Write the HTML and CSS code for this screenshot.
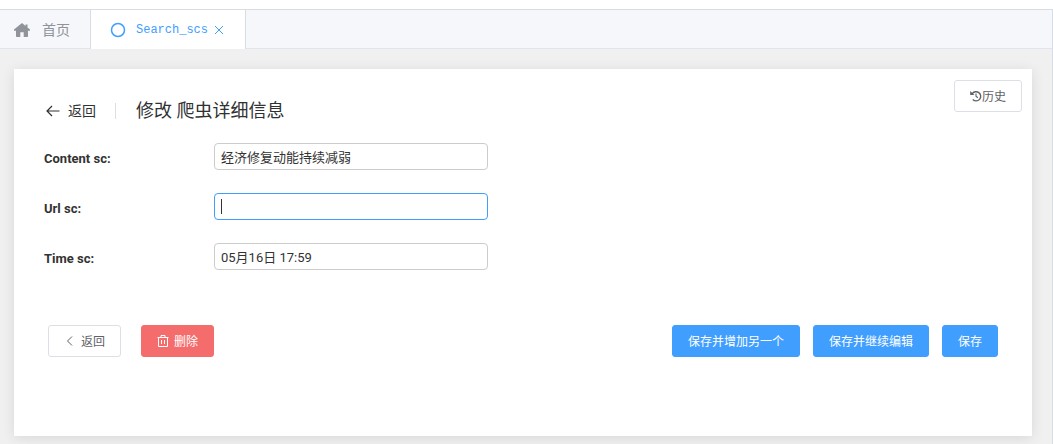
FILE: index.html
```html
<!DOCTYPE html>
<html lang="zh-CN">
<head>
<meta charset="utf-8">
<meta name="viewport" content="width=device-width, initial-scale=1">
<title>修改 爬虫详细信息</title>
<link rel="stylesheet" href="styles.css">
</head>
<body>
<div class="workspace">
  <nav class="tabs">
    <a class="tab" href="#home">
      <svg class="icon-home" viewBox="0 0 16 14" aria-hidden="true"><path d="M8 0 0 6.500v1.300h2V13.200a.8.8 0 0 0 .8.8H6.300V9.300h3.400V14h3.500a.8.8 0 0 0 .8-.8V7.800h2V6.500L13.500 4.500V1.500h-2v1.400z" fill="currentColor"/></svg>
      <span>首页</span>
    </a>
    <div class="tab tab-active">
      <svg class="icon-circle" viewBox="0 0 16 16" aria-hidden="true"><circle cx="8" cy="8" r="6.500" fill="none" stroke="currentColor" stroke-width="1.500"/></svg>
      <a class="tab-name" href="#search">Search_scs</a>
      <button class="tab-close" type="button" aria-label="关闭">
        <svg viewBox="0 0 10 10" aria-hidden="true"><path d="M1 1l8 8M9 1L1 9" stroke="currentColor"/></svg>
      </button>
    </div>
  </nav>
  <main class="content">
    <form class="card">
      <header class="card-head">
        <a class="back" href="#back">
          <svg class="icon-back" viewBox="0 0 14 12" aria-hidden="true"><path d="M13.500 6H1M6 1 1 6l5 5" fill="none" stroke="currentColor" stroke-width="1.200"/></svg>
          <span>返回</span>
        </a>
        <h1 class="title">修改 爬虫详细信息</h1>
        <button class="btn history" type="button">
          <svg class="icon-history" viewBox="0 0 13 13" aria-hidden="true"><path d="M2.300 4.300A5 5 0 1 1 3 10.300" fill="none" stroke="currentColor" stroke-width="1.500"/><path d="M.2 1.200v4.300h4.600z" fill="currentColor"/><path d="M6.500 3.800v3l2 1.600" fill="none" stroke="currentColor" stroke-width="1.200"/></svg>历史
        </button>
      </header>
      <div class="fields">
        <label class="label" for="content">Content sc:</label>
        <input class="input" id="content" type="text" value="经济修复动能持续减弱">
        <label class="label" for="url">Url sc:</label>
        <input class="input input-current" id="url" type="text">
        <label class="label" for="time">Time sc:</label>
        <input class="input" id="time" type="text" value="05月16日 17:59">
      </div>
      <footer class="actions">
        <div class="group group-left">
          <button class="btn" type="button">
            <svg class="icon-btn" viewBox="0 0 12 12" aria-hidden="true"><path d="M8 1.500 3.500 6 8 10.500" fill="none" stroke="currentColor"/></svg>
            <span>返回</span>
          </button>
          <button class="btn btn-danger" type="button">
            <svg class="icon-btn" viewBox="0 0 12 12" aria-hidden="true"><path d="M.5 2.500h11M4 2.500v-2h4v2M1.500 2.500v9h9v-9M4.500 5v4M7.500 5v4" fill="none" stroke="currentColor"/></svg>
            <span>删除</span>
          </button>
        </div>
        <div class="group">
          <button class="btn btn-primary" type="button">保存并增加另一个</button>
          <button class="btn btn-primary" type="button">保存并继续编辑</button>
          <button class="btn btn-primary" type="submit">保存</button>
        </div>
      </footer>
    </form>
  </main>
</div>
</body>
</html>
```
FILE: styles.css
```css
* {
  box-sizing: border-box;
}

body {
  margin: 0;
  padding-top: 9px;
  min-height: 100vh;
  display: flex;
  background: #fff;
  color: #303133;
  font: 13px/18px Roboto, "Noto Sans CJK SC", sans-serif;
}

a {
  color: inherit;
  text-decoration: none;
}

svg {
  display: block;
  flex: none;
}

.workspace {
  flex: 1;
  display: flex;
  flex-direction: column;
  border: solid #d8dce5;
  border-width: 1px 1px 0 0;
  background: #f0f0f0;
}

.tabs {
  display: flex;
  height: 39px;
  background: #f5f7fa;
  border-bottom: 1px solid #e0e4ec;
}

.tab {
  display: flex;
  align-items: center;
  height: 39px;
  padding: 0 20px 0 14px;
  gap: 12px;
  border-right: 1px solid #d8dce5;
  color: #909399;
  font-size: 14px;
}

.tab-active {
  padding: 0 21px 0 19px;
  gap: 6px;
  background: #fff;
  color: #409eff;
}

.tab-name {
  padding-left: 4px;
  font: 12px/18px "Liberation Mono", monospace;
}

.tab-close {
  width: 10px;
  height: 10px;
  padding: 0;
  border: 0;
  background: none;
  color: inherit;
}

.icon-home {
  width: 16px;
  height: 14px;
}

.icon-circle {
  width: 16px;
  height: 16px;
}

.content {
  flex: 1;
  display: flex;
  padding: 20px 20px 8px 14px;
}

.card {
  flex: 1;
  padding: 11px 10px 16px 30px;
  background: #fff;
  box-shadow: 0 2px 12px rgba(0, 0, 0, 0.1);
}

.card-head {
  display: flex;
  align-items: flex-start;
}

.back {
  display: flex;
  align-items: center;
  gap: 8px;
  margin: 22px 20px 0 2px;
  font-size: 14px;
}

.icon-back {
  width: 14px;
  height: 12px;
}

.title {
  flex: 1;
  display: flex;
  align-items: center;
  gap: 20px;
  margin: 19px 0 0;
  font-size: 18px;
  font-weight: 400;
  line-height: 24px;
}

.title::before {
  content: "";
  width: 1px;
  height: 16px;
  margin-left: -1px;
  background: #dcdfe6;
}

.fields {
  display: grid;
  grid-template-columns: 170px minmax(0, 274px);
  grid-auto-rows: 27px;
  row-gap: 23px;
  align-items: center;
  margin-top: 20px;
}

.label {
  padding-top: 4px;
  color: #333;
  font-weight: 700;
}

.input {
  width: 100%;
  height: 27px;
  padding: 0 6px;
  border: 1px solid #ccc;
  border-radius: 4px;
  outline: 0;
  background: #fff;
  color: #333;
  font: inherit;
}

.input-current {
  border-color: #409eff;
}

/* Caret in the field being edited */
.input-current:not(:focus) {
  background: linear-gradient(#333, #333) 6px center / 1px 15px no-repeat #fff;
}

.actions {
  display: flex;
  justify-content: space-between;
  margin: 55px 24px 0 4px;
}

.group {
  display: flex;
  gap: 13px;
}

.group-left {
  gap: 20px;
}

.btn {
  display: flex;
  align-items: center;
  justify-content: center;
  height: 32px;
  padding: 2px 15px 0;
  border: 1px solid #dcdfe6;
  border-radius: 3px;
  background: #fff;
  color: #606266;
  font: 12px/16px Roboto, "Noto Sans CJK SC", sans-serif;
}

.btn-primary {
  border-color: #409eff;
  background: #409eff;
  color: #fff;
}

.btn-danger {
  border-color: #f56c6c;
  background: #f56c6c;
  color: #fff;
}

.icon-btn {
  width: 12px;
  height: 12px;
  margin: 0 5px 2px 0;
}

.icon-history {
  width: 12px;
  height: 12px;
  margin-bottom: 2px;
}
```
